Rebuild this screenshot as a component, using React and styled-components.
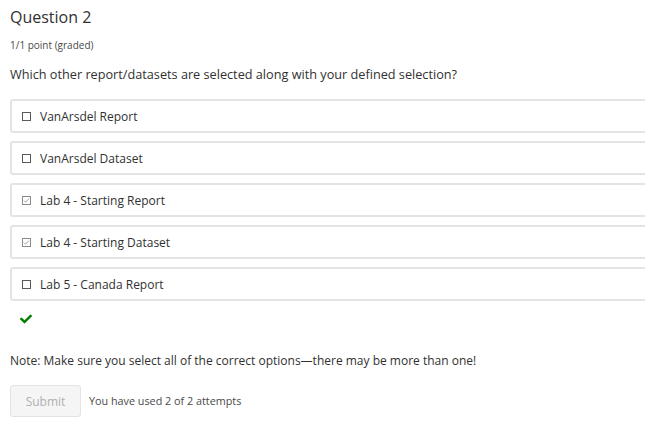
import React from "react";
import styled, { createGlobalStyle } from "styled-components";
import { FaCheck } from "react-icons/fa";

const GlobalStyle = createGlobalStyle`
  html, body {
    margin: 0;
    padding: 0;
    background: #fff;
    overflow: hidden;
  }
  body {
    font-family: "Open Sans", "Noto Sans", sans-serif;
    color: #313131;
  }
`;

const Page = styled.div`
  padding: 5px 0 0 10px;
  width: 700px;
`;

const Title = styled.h3`
  margin: 0;
  font-size: 16px;
  font-weight: 400;
  color: #313131;
  line-height: 24px;
`;

const Points = styled.div`
  margin-top: 10px;
  font-size: 10px;
  color: #4a4a4a;
  line-height: 13px;
`;

const Prompt = styled.p`
  margin: 14px 0 0;
  font-size: 12.7px;
  line-height: 16px;
`;

const Options = styled.div`
  margin-top: 17px;
  display: flex;
  flex-direction: column;
  gap: 8px;
`;

const Option = styled.label`
  display: flex;
  align-items: center;
  gap: 9px;
  height: 30px;
  padding-left: 10px;
  width: 660px;
  border: 2px solid #e4e4e4;
  border-radius: 3px;
  font-size: 12px;
  color: #313131;
`;

const BoxIcon = ({ checked }) => (
  <svg width="9" height="9" viewBox="0 0 9 9">
    <rect
      x="0.5"
      y="0.5"
      width="8"
      height="8"
      fill="#fff"
      stroke={checked ? "#8a8a8a" : "#5a5a5a"}
    />
    {checked && (
      <path d="M2 4.6 L3.6 6.2 L7 2.6" fill="none" stroke="#9aa3ad" strokeWidth="1" />
    )}
  </svg>
);

const Correct = styled.div`
  margin: 11px 0 0 10px;
  height: 14px;
  color: #008100;
  font-size: 12px;
  display: flex;
  align-items: center;
`;

const Note = styled.p`
  margin: 27px 0 0;
  font-size: 12px;
  line-height: 16px;
`;

const Actions = styled.div`
  margin-top: 16px;
  display: flex;
  align-items: center;
  gap: 8px;
`;

const SubmitButton = styled.button`
  width: 71px;
  height: 32px;
  background: #f5f5f5;
  border: 1px solid #e3e3e3;
  border-radius: 3px;
  color: #b0b0b0;
  font-family: "Open Sans", "Noto Sans", sans-serif;
  font-size: 12px;
  padding: 0;
`;

const Attempts = styled.span`
  font-size: 10.8px;
  color: #4a4a4a;
  margin-top: -2px;
`;

const options = [
  { label: "VanArsdel Report", checked: false },
  { label: "VanArsdel Dataset", checked: false },
  { label: "Lab 4 - Starting Report", checked: true },
  { label: "Lab 4 - Starting Dataset", checked: true },
  { label: "Lab 5 - Canada Report", checked: false },
];

export default function App() {
  return (
    <Page>
      <GlobalStyle />
      <Title>Question 2</Title>
      <Points>1/1 point (graded)</Points>
      <Prompt>
        Which other report/datasets are selected along with your defined
        selection?
      </Prompt>
      <Options>
        {options.map((o) => (
          <Option key={o.label}>
            <BoxIcon checked={o.checked} />
            {o.label}
          </Option>
        ))}
      </Options>
      <Correct>
        <FaCheck />
      </Correct>
      <Note>
        Note: Make sure you select all of the correct options—there may be more
        than one!
      </Note>
      <Actions>
        <SubmitButton disabled>Submit</SubmitButton>
        <Attempts>You have used 2 of 2 attempts</Attempts>
      </Actions>
    </Page>
  );
}
